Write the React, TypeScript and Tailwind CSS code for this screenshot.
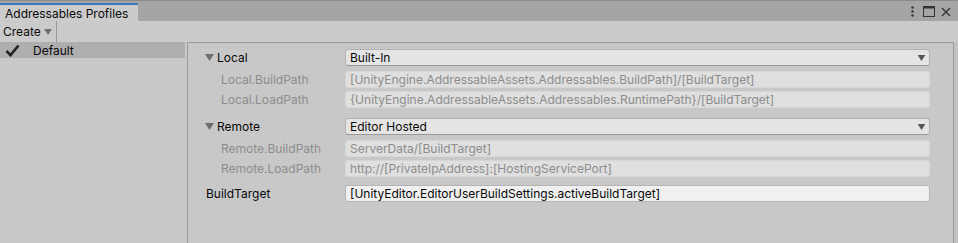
import React from "react";

const Caret = ({ className = "" }: { className?: string }) => (
  <svg width="9" height="7" viewBox="0 0 9 7" className={className}>
    <path d="M0 0h9L4.5 7z" fill="currentColor" />
  </svg>
);

const Dropdown = ({ value }: { value: string }) => (
  <div className="flex-1 h-[17px] flex items-center justify-between pl-[4px] pr-[3px] bg-[#e4e4e4] border border-[#b3b3b3] border-b-[#999] rounded-[3px] text-[#090909]">
    <span>{value}</span>
    <Caret className="text-[#555] w-[9px] h-[6px]" />
  </div>
);

const PathField = ({ value }: { value: string }) => (
  <div className="flex-1 h-[17px] flex items-center pl-[4px] bg-[#dfdfdf] border border-[#d6d6d6] rounded-[3px] text-[#8d8d8d]">
    {value}
  </div>
);

const Group = ({
  name,
  mode,
  build,
  load,
}: {
  name: string;
  mode: string;
  build: string;
  load: string;
}) => (
  <div className="flex flex-col">
    <div className="flex items-center h-[17px]">
      <div className="w-[157px] flex items-center pl-[17px] gap-[3px] text-[#090909]">
        <Caret className="text-[#6e6e6e]" />
        <span>{name}</span>
      </div>
      <Dropdown value={mode} />
    </div>
    <div className="flex items-center h-[17px] mt-[5px]">
      <div className="w-[157px] pl-[33px] text-[#8d8d8d]">{name}.BuildPath</div>
      <PathField value={build} />
    </div>
    <div className="flex items-center h-[17px] mt-[3px]">
      <div className="w-[157px] pl-[33px] text-[#8d8d8d]">{name}.LoadPath</div>
      <PathField value={load} />
    </div>
  </div>
);

export default function App() {
  return (
    <div className="w-[958px] h-[243px] bg-[#c8c8c8] flex flex-col text-[12px] leading-none font-['Inter','Liberation_Sans',sans-serif] overflow-hidden">
      <div className="h-[21px] bg-[#a5a5a5] flex items-end justify-between border-t border-[#8a8a8a]">
        <div className="w-[138px] h-[18px] bg-[#cbcbcb] border-t-2 border-[#3a79bb] pl-[5px] pt-[1px] flex items-center text-[#090909]">
          Addressables Profiles
        </div>
        <div className="flex items-center gap-[6px] pr-[7px] h-[19px] text-[#222]">
          <svg width="3" height="11" viewBox="0 0 3 11">
            <circle cx="1.5" cy="1.5" r="1.2" fill="#333" />
            <circle cx="1.5" cy="5.5" r="1.2" fill="#333" />
            <circle cx="1.5" cy="9.5" r="1.2" fill="#333" />
          </svg>
          <svg width="12" height="11" viewBox="0 0 12 11" className="ml-[3px]">
            <rect x="0.5" y="0.5" width="11" height="10" fill="none" stroke="#333" />
            <rect x="0.5" y="0.5" width="11" height="2" fill="#333" />
          </svg>
          <svg width="10" height="10" viewBox="0 0 10 10">
            <path d="M1 1l8 8M9 1l-8 8" stroke="#333" strokeWidth="1.3" />
          </svg>
        </div>
      </div>
      <div className="h-[21px] bg-[#cbcbcb] flex items-stretch">
        <div className="w-[57px] flex items-center pl-[3px] pt-[1px] gap-[3px] border-r border-[#999] text-[#090909]">
          <span>Create</span>
          <Caret className="text-[#6e6e6e] w-[8px] h-[6px]" />
        </div>
      </div>
      <div className="flex-1 flex">
        <div className="w-[187px] flex flex-col">
          <div className="w-[185px] h-[16px] bg-[#aeaeae] flex items-center pl-[5px] pt-[1px] text-[#090909]">
            <svg width="15" height="13" viewBox="0 0 15 13">
              <path d="M1.5 7l4 4.2L13.5 1.5" fill="none" stroke="#222" strokeWidth="2.6" />
            </svg>
            <span className="ml-[13px]">Default</span>
          </div>
        </div>
        <div className="w-[767px] border-l border-t border-r border-[#999] flex flex-col pt-[6px] pr-[23px]">
          <Group
            name="Local"
            mode="Built-In"
            build="[UnityEngine.AddressableAssets.Addressables.BuildPath]/[BuildTarget]"
            load="{UnityEngine.AddressableAssets.Addressables.RuntimePath}/[BuildTarget]"
          />
          <div className="mt-[10px]">
            <Group
              name="Remote"
              mode="Editor Hosted"
              build="ServerData/[BuildTarget]"
              load="http://[PrivateIpAddress]:[HostingServicePort]"
            />
          </div>
          <div className="flex items-center h-[17px] mt-[8px]">
            <div className="w-[157px] pl-[18px] text-[#090909]">BuildTarget</div>
            <div className="flex-1 h-[17px] flex items-center pl-[4px] bg-[#f0f0f0] border border-[#b5b5b5] rounded-[3px] text-[#090909]">
              [UnityEditor.EditorUserBuildSettings.activeBuildTarget]
            </div>
          </div>
        </div>
        <div className="flex-1 bg-[#c2c2c2]" />
      </div>
    </div>
  );
}
